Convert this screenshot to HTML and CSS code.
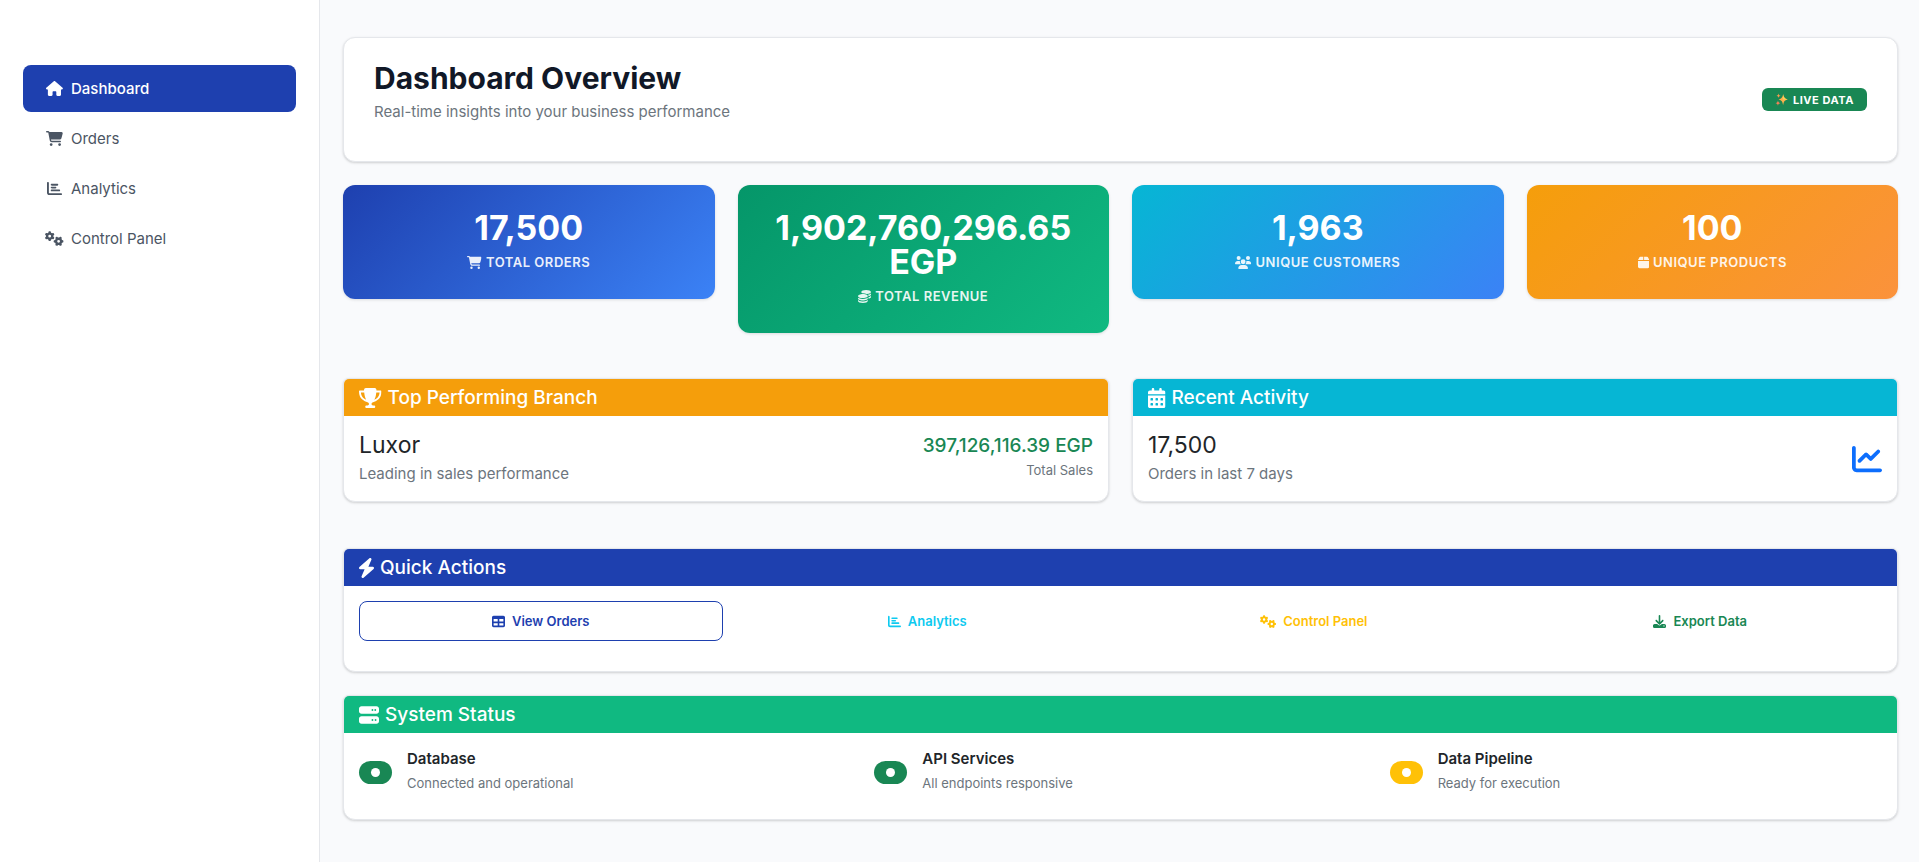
FILE: index.html
```html
<!DOCTYPE html>
<html lang="en">
<head>
<meta charset="utf-8">
<meta name="viewport" content="width=device-width, initial-scale=1">
<title>Dashboard Overview</title>
<link rel="stylesheet" href="styles.css">
</head>
<body>
<svg class="sprite" aria-hidden="true">
  <symbol id="i-house" viewBox="0 0 576 512"><path d="M575.8 255.5c0 18-15 32.1-32 32.1h-32l.7 160.2c0 2.7-.2 5.4-.5 8.1V472c0 22.1-17.9 40-40 40H456c-1.1 0-2.2 0-3.3-.1c-1.4 .1-2.8 .1-4.2 .1H416 392c-22.1 0-40-17.9-40-40V448 384c0-17.7-14.3-32-32-32H256c-17.7 0-32 14.3-32 32v64 24c0 22.1-17.9 40-40 40H160 128.1c-1.5 0-3-.1-4.5-.2c-1.2 .1-2.4 .2-3.6 .2H104c-22.1 0-40-17.9-40-40V360c0-.9 0-1.9 .1-2.8V287.6H32c-18 0-32-14-32-32.1c0-9 3-17 10-24L266.4 8c7-7 15-8 22-8s15 2 21 7L564.8 231.5c8 7 12 15 11 24z"/></symbol>
  <symbol id="i-cart" viewBox="0 0 576 512"><path d="M0 24C0 10.7 10.7 0 24 0H69.5c22 0 41.5 12.8 50.6 32h411c26.3 0 45.5 25 38.6 50.4l-41 152.3c-8.5 31.4-37 53.3-69.5 53.3H170.7l5.4 28.5c2.2 11.3 12.1 19.5 23.6 19.5H488c13.3 0 24 10.7 24 24s-10.7 24-24 24H199.7c-34.6 0-64.3-24.6-70.7-58.5L77.4 54.5c-.7-3.8-4-6.5-7.9-6.5H24C10.7 48 0 37.3 0 24zM128 464a48 48 0 1 1 96 0 48 48 0 1 1 -96 0zm336-48a48 48 0 1 1 0 96 48 48 0 1 1 0-96z"/></symbol>
  <symbol id="i-bars" viewBox="0 0 512 512"><path d="M32 32c17.7 0 32 14.3 32 32V400c0 8.8 7.2 16 16 16H480c17.7 0 32 14.3 32 32s-14.3 32-32 32H80c-44.2 0-80-35.8-80-80V64C0 46.3 14.3 32 32 32zm96 96c0-17.7 14.3-32 32-32l192 0c17.7 0 32 14.3 32 32s-14.3 32-32 32H160c-17.7 0-32-14.3-32-32zm32 64H288c17.7 0 32 14.3 32 32s-14.3 32-32 32H160c-17.7 0-32-14.3-32-32s14.3-32 32-32zm0 96H416c17.7 0 32 14.3 32 32s-14.3 32-32 32H160c-17.7 0-32-14.3-32-32s14.3-32 32-32z"/></symbol>
  <symbol id="i-gears" viewBox="0 0 640 512"><path d="M308.5 135.3c7.1-6.3 9.9-16.2 6.2-25c-2.3-5.3-4.8-10.5-7.6-15.5L304 89.4c-3-5-6.3-9.9-9.8-14.6c-5.7-7.6-15.7-10.1-24.7-7.1l-28.2 9.3c-10.7-8.8-23-16-36.2-20.9L199 27.1c-1.9-9.3-9.1-16.7-18.5-17.8C173.9 8.4 167.2 8 160.4 8h-.7c-6.8 0-13.5 .4-20.1 1.2c-9.4 1.1-16.6 8.6-18.5 17.8L115 56.1c-13.3 5-25.5 12.1-36.2 20.9L50.5 67.8c-9-3-19-.5-24.7 7.1c-3.5 4.7-6.8 9.6-9.9 14.6l-3 5.3c-2.8 5-5.3 10.2-7.6 15.6c-3.7 8.7-.9 18.6 6.2 25l22.2 19.8C32.6 161.9 32 168.9 32 176s.6 14.1 1.7 20.9L11.5 216.7c-7.1 6.3-9.9 16.2-6.2 25c2.3 5.3 4.8 10.5 7.6 15.6l3 5.2c3 5.1 6.3 9.9 9.9 14.6c5.7 7.6 15.7 10.1 24.7 7.1l28.2-9.3c10.7 8.8 23 16 36.2 20.9l6.1 29.1c1.9 9.3 9.1 16.7 18.5 17.8c6.7 .8 13.5 1.2 20.4 1.2s13.7-.4 20.4-1.2c9.4-1.1 16.6-8.6 18.5-17.8l6.1-29.1c13.3-5 25.5-12.1 36.2-20.9l28.2 9.3c9 3 19 .5 24.7-7.1c3.5-4.7 6.8-9.5 9.8-14.6l3.1-5.4c2.8-5 5.3-10.2 7.6-15.5c3.7-8.7 .9-18.6-6.2-25l-22.2-19.8c1.1-6.8 1.7-13.8 1.7-20.9s-.6-14.1-1.7-20.9l22.2-19.8zM112 176a48 48 0 1 1 96 0 48 48 0 1 1 -96 0zM504.700 500.500c6.300 7.100 16.200 9.900 25 6.200c5.300-2.300 10.500-4.800 15.500-7.600l5.400-3.100c5-3 9.900-6.300 14.600-9.800c7.600-5.700 10.100-15.700 7.100-24.700l-9.300-28.200c8.800-10.700 16-23 20.900-36.200l29.100-6.100c9.300-1.900 16.700-9.100 17.800-18.500c.8-6.700 1.200-13.500 1.200-20.400s-.4-13.700-1.200-20.400c-1.100-9.400-8.600-16.600-17.800-18.500L583.900 307c-5-13.300-12.100-25.500-20.900-36.200l9.300-28.200c3-9 .5-19-7.100-24.700c-4.700-3.500-9.600-6.800-14.600-9.900l-5.300-3c-5-2.800-10.200-5.300-15.600-7.600c-8.700-3.700-18.600-.9-25 6.200l-19.800 22.200c-6.800-1.100-13.800-1.700-20.900-1.700s-14.100 .6-20.900 1.700l-19.800-22.200c-6.300-7.100-16.200-9.900-25-6.200c-5.300 2.300-10.500 4.800-15.600 7.600l-5.200 3c-5.100 3-9.900 6.300-14.600 9.900c-7.600 5.700-10.100 15.700-7.100 24.700l9.300 28.200c-8.800 10.700-16 23-20.900 36.200L315.100 313c-9.300 1.900-16.700 9.100-17.800 18.500c-.8 6.700-1.200 13.500-1.200 20.400s.4 13.700 1.200 20.400c1.100 9.400 8.600 16.600 17.800 18.500l29.100 6.100c5 13.300 12.100 25.500 20.900 36.200l-9.300 28.200c-3 9-.5 19 7.100 24.700c4.700 3.500 9.500 6.800 14.600 9.800l5.400 3.100c5 2.800 10.200 5.300 15.500 7.600c8.700 3.700 18.600 .9 25-6.200l19.800-22.200c6.800 1.100 13.800 1.700 20.900 1.700s14.100-.6 20.900-1.700l19.800 22.200zM464 304a48 48 0 1 1 0 96 48 48 0 1 1 0-96z"/></symbol>
  <symbol id="i-coins" viewBox="0 0 512 512"><path d="M512 80c0 18-14.3 34.6-38.4 48c-29.1 16.1-72.5 27.5-122.3 30.9c-3.7-1.8-7.4-3.500-11.3-5C300.6 137.4 248.2 128 192 128c-8.300 0-16.400 .2-24.500 .6l-1.100-.6C142.300 114.600 128 98 128 80c0-44.200 86-80 192-80S512 35.800 512 80zM160.700 161.100c10.200-.7 20.700-1.100 31.300-1.100c62.200 0 117.400 12.300 152.500 31.400C369.300 204.900 384 221.700 384 240c0 4-.7 7.900-2.100 11.700c-4.600 13.200-17 25.300-35 35.500c-.4 .2-.9 .5-1.300 .7c-35 19.400-90.800 32-153.600 32c-59.600 0-112.900-11.300-148.200-29.100c-1.900-.9-3.700-1.900-5.500-2.900C14.300 274.600 0 258 0 240c0-34.800 53.400-64.500 128-75.400c10.500-1.500 21.400-2.700 32.700-3.500zM416 240c0-21.900-10.600-39.900-24.100-53.400c28.300-4.400 54.200-11.400 76.200-20.500c16.300-6.800 31.500-15.200 43.900-25.500V176c0 19.300-16.500 37.100-43.800 50.900c-14.600 7.400-32.400 13.700-52.400 18.500c.1-1.800 .2-3.500 .2-5.300zm-32 96c0 18-14.300 34.600-38.400 48c-1.800 1-3.600 1.900-5.500 2.900C304.900 404.700 251.600 416 192 416c-62.800 0-118.600-12.600-153.600-32C14.300 370.600 0 354 0 336V300.600c12.500 10.300 27.600 18.700 43.900 25.500C83.400 342.600 135.800 352 192 352s108.600-9.400 148.100-25.900c7.800-3.200 15.300-6.900 22.400-10.900c6.100-3.400 11.800-7.200 17.200-11.200c1.500-1.100 2.900-2.300 4.300-3.400V336zm32 0V278.100c19-4.200 36.500-9.500 52.100-16c16.300-6.800 31.500-15.200 43.900-25.500V272c0 10.500-5 21-14.900 30.900c-16.300 16.300-45 29.700-81.300 38.400c.1-1.700 .2-3.500 .2-5.300zM192 448c56.200 0 108.600-9.400 148.100-25.900c16.300-6.800 31.500-15.200 43.900-25.500V432c0 44.200-86 80-192 80S0 476.200 0 432V396.600c12.500 10.300 27.600 18.700 43.900 25.500C83.400 438.600 135.800 448 192 448z"/></symbol>
  <symbol id="i-users" viewBox="0 0 640 512"><path d="M144 0a80 80 0 1 1 0 160A80 80 0 1 1 144 0zM512 0a80 80 0 1 1 0 160A80 80 0 1 1 512 0zM0 298.7C0 239.800 47.800 192 106.700 192h42.700c15.900 0 31 3.500 44.600 9.700c-1.300 7.200-1.900 14.700-1.900 22.300c0 38.200 16.800 72.500 43.300 96H21.300C9.600 320 0 310.400 0 298.700zM405.300 320c26.600-23.500 42.600-57.800 42.600-96c0-7.600-.7-15-1.900-22.300c13.600-6.300 28.700-9.700 44.600-9.700h42.700C592.200 192 640 239.800 640 298.700c0 11.800-9.600 21.300-21.300 21.300H405.300zM224 224a96 96 0 1 1 192 0 96 96 0 1 1 -192 0zM128 485.300C128 411.700 187.700 352 261.300 352H378.700C452.300 352 512 411.700 512 485.300c0 14.700-11.900 26.700-26.700 26.700H154.700c-14.700 0-26.700-11.900-26.700-26.700z"/></symbol>
  <symbol id="i-box" viewBox="0 0 448 512"><path d="M50.700 58.500L0 160H208V32H93.700C75.500 32 58.900 42.300 50.700 58.500zM240 160H448L397.300 58.500C389.100 42.300 372.500 32 354.300 32H240V160zm208 32H0V416c0 35.300 28.700 64 64 64H384c35.300 0 64-28.700 64-64V192z"/></symbol>
  <symbol id="i-trophy" viewBox="0 0 576 512"><path d="M400 0H176c-26.500 0-48.100 21.800-47.100 48.200c.2 5.300 .4 10.600 .7 15.800H24C10.700 64 0 74.700 0 88c0 92.600 33.500 157 78.500 200.700c44.300 43.100 98.300 64.800 138.100 75.800c23.400 6.500 39.400 26 39.400 45.600c0 20.900-17 37.900-37.900 37.900H192c-17.700 0-32 14.300-32 32s14.300 32 32 32H384c17.700 0 32-14.300 32-32s-14.300-32-32-32H357.900C337 448 320 431 320 410.100c0-19.600 15.900-39.200 39.400-45.600c39.900-11 93.900-32.700 138.200-75.800C542.500 245 576 180.600 576 88c0-13.300-10.700-24-24-24H446.400c.3-5.200 .5-10.400 .7-15.800C448.100 21.800 426.500 0 400 0zM48.900 112h84.400c9.100 90.100 29.200 150.300 51.900 190.600c-24.900-11-50.800-26.500-73.200-48.300c-32-31.100-58-76-63-142.300zM464.100 254.300c-22.400 21.800-48.300 37.300-73.200 48.300c22.700-40.300 42.800-100.500 51.900-190.600h84.400c-5.100 66.300-31.100 111.200-63 142.300z"/></symbol>
  <symbol id="i-calendar" viewBox="0 0 448 512"><path fill-rule="evenodd" d="M128 0c17.700 0 32 14.300 32 32V64H288V32c0-17.700 14.300-32 32-32s32 14.300 32 32V64h48c26.500 0 48 21.500 48 48v48H0V112C0 85.500 21.500 64 48 64H96V32c0-17.700 14.300-32 32-32zM0 192H448V464c0 26.500-21.500 48-48 48H48c-26.500 0-48-21.500-48-48V192zM80 256a16 16 0 0 0-16 16v32a16 16 0 0 0 16 16h32a16 16 0 0 0 16-16v-32a16 16 0 0 0-16-16zM208 256a16 16 0 0 0-16 16v32a16 16 0 0 0 16 16h32a16 16 0 0 0 16-16v-32a16 16 0 0 0-16-16zM336 256a16 16 0 0 0-16 16v32a16 16 0 0 0 16 16h32a16 16 0 0 0 16-16v-32a16 16 0 0 0-16-16zM80 384a16 16 0 0 0-16 16v32a16 16 0 0 0 16 16h32a16 16 0 0 0 16-16v-32a16 16 0 0 0-16-16zM208 384a16 16 0 0 0-16 16v32a16 16 0 0 0 16 16h32a16 16 0 0 0 16-16v-32a16 16 0 0 0-16-16zM336 384a16 16 0 0 0-16 16v32a16 16 0 0 0 16 16h32a16 16 0 0 0 16-16v-32a16 16 0 0 0-16-16z"/></symbol>
  <symbol id="i-line" viewBox="0 0 512 512"><path d="M64 64c0-17.700-14.300-32-32-32S0 46.300 0 64V400c0 44.200 35.800 80 80 80H480c17.700 0 32-14.300 32-32s-14.300-32-32-32H80c-8.800 0-16-7.200-16-16V64zm406.600 86.600c12.500-12.500 12.500-32.800 0-45.300s-32.800-12.500-45.300 0L320 210.700l-57.400-57.400c-12.500-12.500-32.800-12.500-45.300 0l-112 112c-12.500 12.500-12.500 32.800 0 45.300s32.800 12.500 45.300 0L240 221.300l57.400 57.400c12.500 12.500 32.800 12.500 45.300 0l128-128z"/></symbol>
  <symbol id="i-bolt" viewBox="32 0 384 512"><path d="M349.400 44.600c5.900-13.700 1.500-29.700-10.600-38.500s-28.600-8-39.900 1.800l-256 224c-10 8.800-13.600 22.900-8.900 35.300S50.700 288 64 288H175.500L98.600 467.400c-5.900 13.700-1.500 29.700 10.600 38.500s28.600 8 39.900-1.800l256-224c10-8.800 13.600-22.900 8.900-35.300s-16.600-20.700-30-20.700H272.500L349.400 44.600z"/></symbol>
  <symbol id="i-table" viewBox="0 0 512 512"><path d="M64 256V160H224v96H64zm0 64H224v96H64V320zm224 96V320H448v96H288zM448 256H288V160H448v96zM64 32C28.700 32 0 60.700 0 96V416c0 35.300 28.700 64 64 64H448c35.300 0 64-28.700 64-64V96c0-35.300-28.700-64-64-64H64z"/></symbol>
  <symbol id="i-download" viewBox="0 0 512 512"><path d="M288 32c0-17.700-14.300-32-32-32s-32 14.300-32 32V274.700l-73.400-73.400c-12.500-12.500-32.800-12.500-45.300 0s-12.500 32.800 0 45.300l128 128c12.500 12.500 32.800 12.500 45.300 0l128-128c12.500-12.500 12.500-32.800 0-45.300s-32.800-12.500-45.300 0L288 274.700V32zM64 352c-35.300 0-64 28.700-64 64v32c0 35.300 28.700 64 64 64H448c35.300 0 64-28.700 64-64V416c0-35.300-28.700-64-64-64H346.500l-45.300 45.300c-25 25-65.500 25-90.500 0L165.500 352H64zm368 56a24 24 0 1 1 0 48 24 24 0 1 1 0-48z"/></symbol>
  <symbol id="i-server" viewBox="0 0 512 512"><path d="M64 32C28.700 32 0 60.700 0 96v64c0 35.300 28.700 64 64 64H448c35.300 0 64-28.700 64-64V96c0-35.300-28.700-64-64-64H64zm280 72a24 24 0 1 1 0 48 24 24 0 1 1 0-48zm48 24a24 24 0 1 1 48 0 24 24 0 1 1 -48 0zM64 288c-35.300 0-64 28.700-64 64v64c0 35.300 28.700 64 64 64H448c35.300 0 64-28.700 64-64V352c0-35.300-28.700-64-64-64H64zm280 72a24 24 0 1 1 0 48 24 24 0 1 1 0-48zm56 24a24 24 0 1 1 48 0 24 24 0 1 1 -48 0z"/></symbol>
  <symbol id="i-sparkles" viewBox="0 0 24 24"><path fill="#fbb04c" d="M15 2c1 6 2.500 8.500 8.500 10C17.500 13.500 16 16 15 22.500C14 16 12.500 13.500 6.500 12C12.500 10.500 14 8 15 2z"/><path fill="#fcd35a" d="M15 2c1 6 2.500 8.500 8.500 10H15z"/><path fill="#f5825a" d="M5.500 14c.6 3 1.500 4 4.500 4.700c-3 .7-3.900 1.700-4.500 4.800c-.6-3.100-1.500-4.100-4.500-4.800c3-.7 3.900-1.700 4.500-4.700z"/><path fill="#f99a50" d="M6.500 1c.5 2.500 1.300 3.400 4 4c-2.700 .6-3.500 1.500-4 4c-.5-2.500-1.300-3.400-4-4c2.700-.6 3.500-1.500 4-4z"/></symbol>
</svg>

<div class="app">
  <aside class="sidebar">
    <nav class="nav" aria-label="Main">
      <a class="nav-link active" href="#" aria-current="page"><span class="nav-icon"><svg class="icon wide"><use href="#i-house"/></svg></span>Dashboard</a>
      <a class="nav-link" href="#"><span class="nav-icon"><svg class="icon wide"><use href="#i-cart"/></svg></span>Orders</a>
      <a class="nav-link" href="#"><span class="nav-icon"><svg class="icon"><use href="#i-bars"/></svg></span>Analytics</a>
      <a class="nav-link" href="#"><span class="nav-icon"><svg class="icon wider"><use href="#i-gears"/></svg></span>Control Panel</a>
    </nav>
  </aside>

  <main class="main">
    <header class="panel page-head">
      <div class="page-text">
        <h1 class="page-title">Dashboard Overview</h1>
        <p class="muted">Real-time insights into your business performance</p>
      </div>
      <span class="live"><svg class="icon"><use href="#i-sparkles"/></svg>Live Data</span>
    </header>

    <section class="stats" aria-label="Totals">
      <div class="stat blue">
        <div class="stat-value">17,500</div>
        <div class="stat-label"><svg class="icon wide"><use href="#i-cart"/></svg>Total Orders</div>
      </div>
      <div class="stat green">
        <div class="stat-value">1,902,760,296.65 EGP</div>
        <div class="stat-label"><svg class="icon"><use href="#i-coins"/></svg>Total Revenue</div>
      </div>
      <div class="stat cyan">
        <div class="stat-value">1,963</div>
        <div class="stat-label"><svg class="icon wider"><use href="#i-users"/></svg>Unique Customers</div>
      </div>
      <div class="stat orange">
        <div class="stat-value">100</div>
        <div class="stat-label"><svg class="icon narrow"><use href="#i-box"/></svg>Unique Products</div>
      </div>
    </section>

    <div class="pair">
      <section class="panel titled">
        <h2 class="panel-title amber"><svg class="icon wide"><use href="#i-trophy"/></svg>Top Performing Branch</h2>
        <div class="panel-body split">
          <div>
            <h3 class="big">Luxor</h3>
            <p class="muted">Leading in sales performance</p>
          </div>
          <div class="sales">
            <div class="amount">397,126,116.39 EGP</div>
            <small class="small">Total Sales</small>
          </div>
        </div>
      </section>
      <section class="panel titled">
        <h2 class="panel-title aqua"><svg class="icon narrow"><use href="#i-calendar"/></svg>Recent Activity</h2>
        <div class="panel-body split">
          <div>
            <h3 class="big">17,500</h3>
            <p class="muted">Orders in last 7 days</p>
          </div>
          <svg class="icon trend"><use href="#i-line"/></svg>
        </div>
      </section>
    </div>

    <section class="panel titled">
      <h2 class="panel-title navy"><svg class="icon slim"><use href="#i-bolt"/></svg>Quick Actions</h2>
      <div class="panel-body actions">
        <a class="btn btn-primary" href="#"><svg class="icon"><use href="#i-table"/></svg>View Orders</a>
        <a class="btn btn-info" href="#"><svg class="icon"><use href="#i-bars"/></svg>Analytics</a>
        <a class="btn btn-warning" href="#"><svg class="icon wider"><use href="#i-gears"/></svg>Control Panel</a>
        <button class="btn btn-success" type="button"><svg class="icon"><use href="#i-download"/></svg>Export Data</button>
      </div>
    </section>

    <section class="panel titled">
      <h2 class="panel-title emerald"><svg class="icon"><use href="#i-server"/></svg>System Status</h2>
      <div class="panel-body statuses">
        <div class="status">
          <span class="pill ok"></span>
          <div>
            <h3 class="status-name">Database</h3>
            <p class="small">Connected and operational</p>
          </div>
        </div>
        <div class="status">
          <span class="pill ok"></span>
          <div>
            <h3 class="status-name">API Services</h3>
            <p class="small">All endpoints responsive</p>
          </div>
        </div>
        <div class="status">
          <span class="pill wait"></span>
          <div>
            <h3 class="status-name">Data Pipeline</h3>
            <p class="small">Ready for execution</p>
          </div>
        </div>
      </div>
    </section>
  </main>
</div>
</body>
</html>
```
FILE: styles.css
```css
* {
  box-sizing: border-box;
}

body {
  margin: 0;
  background: #f9fafc;
  color: #212529;
  font: 400 15px/24px Inter, "Liberation Sans", sans-serif;
}

h1, h2, h3, p {
  margin: 0;
}

.sprite {
  display: none;
}

.icon {
  width: 1em;
  height: 1em;
  flex: none;
  fill: currentColor;
}

.icon.slim { width: 0.75em; }
.icon.narrow { width: 0.875em; }
.icon.wide { width: 1.125em; }
.icon.wider { width: 1.25em; }

.app {
  display: flex;
  min-height: 100vh;
}

/* Sidebar */
.sidebar {
  flex: none;
  width: 320px;
  padding: 65px 23px 23px;
  background: #fff;
  border-right: 1px solid #e5e7eb;
}

.nav {
  display: flex;
  flex-direction: column;
  gap: 3px;
}

.nav-link {
  display: flex;
  align-items: center;
  gap: 7px;
  height: 47px;
  padding: 0 22px;
  border-radius: 8px;
  color: #4b5563;
  text-decoration: none;
}

.nav-link.active {
  background: #1e40af;
  color: #fff;
  font-weight: 500;
}

.nav-icon {
  display: flex;
  justify-content: center;
  width: 19px;
}

/* Content */
.main {
  flex: 1;
  min-width: 0;
  display: flex;
  flex-direction: column;
  gap: 23px;
  padding: 37px 21px 23px 23px;
}

.panel {
  overflow: hidden;
  background: #fff;
  border: 1px solid #e5e7eb;
  border-radius: 12px;
  box-shadow: 0 1px 3px rgba(0, 0, 0, 0.12), 0 1px 2px rgba(0, 0, 0, 0.06);
}

.panel.titled {
  border-radius: 6px 6px 12px 12px;
}

.muted {
  color: #6c757d;
}

.small {
  color: #6c757d;
  font-size: 13px;
  line-height: 20px;
}

.page-head {
  display: flex;
  align-items: center;
  justify-content: space-between;
  padding: 22px 30px;
}

.page-text {
  padding-bottom: 15px;
}

.page-title {
  margin-bottom: 4px;
  color: #111827;
  font-size: 30px;
  font-weight: 700;
  line-height: 36px;
}

.live {
  display: flex;
  align-items: center;
  gap: 5px;
  height: 23px;
  padding: 0 13px;
  border-radius: 6px;
  background: #198754;
  color: #fff;
  font-size: 11px;
  font-weight: 700;
  letter-spacing: 0.05em;
  text-transform: uppercase;
}

.live .icon {
  width: 13px;
  height: 13px;
}

/* Totals */
.stats {
  display: grid;
  grid-template-columns: repeat(4, 1fr);
  align-items: start;
  gap: 23px;
  margin-bottom: 22px;
}

.stat {
  padding: 26px 22px 27px;
  border-radius: 12px;
  color: #fff;
  text-align: center;
  box-shadow: 0 1px 3px rgba(0, 0, 0, 0.12);
}

.stat.blue { background: linear-gradient(135deg, #1e40af, #3b82f6); }
.stat.green { background: linear-gradient(135deg, #059669, #10b981); }
.stat.cyan { background: linear-gradient(135deg, #06b6d4, #3b82f6); }
.stat.orange { background: linear-gradient(135deg, #f59e0b, #fb923c); }

.stat-value {
  margin-bottom: 7px;
  font-size: 34px;
  font-weight: 700;
  line-height: 34px;
}

.stat-label {
  display: flex;
  align-items: center;
  justify-content: center;
  gap: 4px;
  font-size: 13px;
  font-weight: 600;
  line-height: 20px;
  letter-spacing: 0.04em;
  text-transform: uppercase;
  opacity: 0.9;
}

/* Panels */
.pair {
  display: grid;
  grid-template-columns: repeat(2, 1fr);
  gap: 23px;
  margin-bottom: 23px;
}

.panel-title {
  display: flex;
  align-items: center;
  gap: 6px;
  height: 37px;
  padding: 0 15px;
  color: #fff;
  font-size: 19px;
  font-weight: 500;
}

.panel-title .icon {
  font-size: 20px;
}

.panel-title.amber { background: #f59e0b; }
.panel-title.aqua { background: #06b6d4; }
.panel-title.navy { background: #1e40af; }
.panel-title.emerald { background: #10b981; }

.panel-body {
  padding: 15px;
}

.split {
  display: flex;
  align-items: center;
  justify-content: space-between;
  padding-top: 16px;
}

.big {
  margin-bottom: 3px;
  font-size: 23px;
  font-weight: 400;
  line-height: 27px;
}

.sales {
  display: flex;
  flex-direction: column;
  gap: 3px;
  padding-bottom: 3px;
  text-align: right;
}

.amount {
  color: #198754;
  font-size: 19px;
  font-weight: 500;
  line-height: 22px;
}

.trend {
  color: #0d6efd;
  font-size: 30px;
}

.actions {
  display: grid;
  grid-template-columns: repeat(4, 1fr);
  gap: 23px;
  padding-bottom: 30px;
}

.btn {
  display: flex;
  align-items: center;
  justify-content: center;
  gap: 7px;
  height: 40px;
  border: 1px solid transparent;
  border-radius: 8px;
  background: none;
  font: 600 13px/20px Inter, "Liberation Sans", sans-serif;
  text-decoration: none;
}

.btn-primary {
  border-color: #1e40af;
  color: #1e40af;
}

.btn-info { color: #0dcaf0; }
.btn-warning { color: #ffc107; }
.btn-success { color: #198754; }

.statuses {
  display: grid;
  grid-template-columns: repeat(3, 1fr);
  gap: 23px;
  padding-bottom: 22px;
}

.status {
  display: flex;
  align-items: center;
  gap: 15px;
}

.status-name {
  margin-bottom: 3px;
  font-size: 15px;
  font-weight: 600;
  line-height: 22px;
}

.status .small {
  padding-bottom: 4px;
}

.pill {
  display: flex;
  align-items: center;
  justify-content: center;
  width: 33px;
  height: 23px;
  border-radius: 12px;
}

.pill::before {
  content: "";
  width: 9px;
  height: 9px;
  border-radius: 50%;
  background: #fff;
}

.pill.ok { background: #198754; }
.pill.wait { background: #ffc107; }
```
